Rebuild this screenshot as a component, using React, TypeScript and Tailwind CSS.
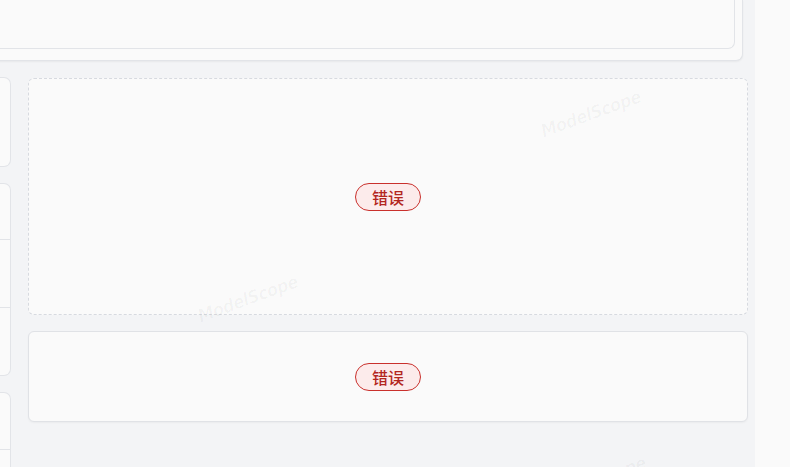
import React from "react";

// 透かし（ModelScope）の配置
const marks = [
  { left: 538, top: 100 },
  { left: 195, top: 285 },
  { left: 543, top: 466 },
];

function ErrorBadge() {
  return (
    <span className="inline-flex items-center justify-center h-[28px] w-[66px] rounded-full border border-[#c9302c] bg-[#fcebeb] text-[#b3261e] text-[16px] font-medium leading-none font-['Noto_Sans_CJK_SC',sans-serif]">
      错误
    </span>
  );
}

export default function App() {
  return (
    <div className="relative w-[790px] h-[467px] overflow-hidden bg-[#f3f4f6] flex font-['Noto_Sans',sans-serif]">
      {/* メイン領域 */}
      <div className="w-[755px] shrink-0 flex flex-col">
        {/* 上部カード */}
        <div className="h-[61px] shrink-0 mr-[12px] ml-[-20px] rounded-b-[7px] border border-t-0 border-[#e2e4e8] bg-[#fafafa] shadow-[0_1px_2px_rgba(0,0,0,0.05)] flex">
          <div className="flex-1 mr-[7px] mb-[11px] rounded-b-[7px] border border-t-0 border-[#e2e4e8] bg-[#fafafa]" />
        </div>

        <div className="shrink-0 flex gap-[17px] mt-[17px]">
          {/* 左カラム（一部のみ表示） */}
          <div className="w-[40px] ml-[-29px] flex flex-col gap-[16px]">
            <div className="h-[90px] -mt-[1px] rounded-r-[7px] border border-l-0 border-[#e2e4e8] bg-[#fafafa]" />
            <div className="h-[193px] rounded-r-[7px] border border-l-0 border-[#e2e4e8] bg-[#fafafa] flex flex-col">
              <div className="h-[56px] border-b border-[#e2e4e8]" />
              <div className="h-[68px] border-b border-[#e2e4e8]" />
              <div className="flex-1" />
            </div>
            <div className="h-[120px] rounded-r-[7px] border border-l-0 border-[#e2e4e8] bg-[#fafafa] flex flex-col">
              <div className="h-[57px] border-b border-[#e2e4e8]" />
              <div className="flex-1" />
            </div>
          </div>

          {/* 右カラム */}
          <div className="flex-1 mr-[7px] flex flex-col gap-[16px]">
            <div className="h-[237px] rounded-[6px] border border-dashed border-[#d7dae0] bg-[#fafafa] flex items-center justify-center">
              <ErrorBadge />
            </div>
            <div className="h-[91px] rounded-[6px] border border-[#e0e2e6] bg-[#fafafa] shadow-[0_1px_2px_rgba(0,0,0,0.04)] flex items-center justify-center">
              <ErrorBadge />
            </div>
          </div>
        </div>
      </div>

      {/* 右端の余白 */}
      <div className="flex-1 bg-[#fafafa]" />

      {/* 透かし */}
      {marks.map((m, i) => (
        <span
          key={i}
          className="absolute pointer-events-none select-none text-[18px] font-bold italic tracking-[-0.5px] text-[rgba(0,0,0,0.03)] rotate-[-20deg] font-['DejaVu_Sans_Condensed',sans-serif]"
          style={{ left: m.left, top: m.top }}
        >
          ModelScope
        </span>
      ))}
    </div>
  );
}
